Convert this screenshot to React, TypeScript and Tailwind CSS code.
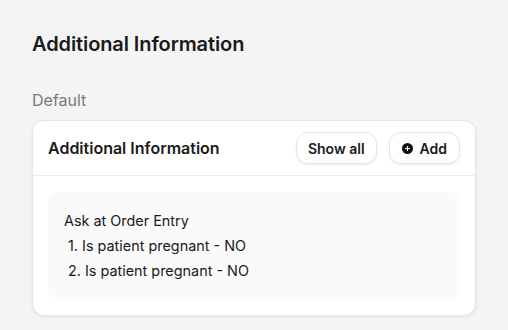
const questions = ["Is patient pregnant - NO", "Is patient pregnant - NO"]

const PlusCircle = () => (
  <svg width="11" height="11" viewBox="0 0 16 16" className="shrink-0">
    <circle cx="8" cy="8" r="8" fill="#111111" />
    <path d="M8 5v6M5 8h6" stroke="#ffffff" strokeWidth="1.6" strokeLinecap="round" />
  </svg>
)

export default function App() {
  return (
    <div className="min-h-[330px] w-full bg-[#f4f4f4] px-8 pt-[30px] font-['Inter',sans-serif] text-[#1a1a1a]">
      <h1 className="text-[20px] font-semibold leading-[28px] tracking-[-0.1px]">Additional Information</h1>
      <p className="mt-[32px] text-[16px] leading-[21px] text-[#7a7a7a]">Default</p>
      <div className="mt-[9px] w-[444px] overflow-hidden rounded-[12px] border border-[#e6e6e6] bg-white shadow-[0_1px_3px_rgba(0,0,0,0.08)]">
        <div className="flex h-[55px] items-center justify-between border-b border-[#ececec] pl-[15px] pr-[15px]">
          <h2 className="text-[16px] font-semibold">Additional Information</h2>
          <div className="flex items-center gap-3">
            <button className="h-[32px] rounded-[12px] border border-[#e4e4e4] bg-white px-[11px] text-[14px] font-semibold shadow-[0_1px_2px_rgba(0,0,0,0.08)]">
              Show all
            </button>
            <button className="flex h-[32px] items-center gap-[7px] rounded-[12px] border border-[#e4e4e4] bg-white px-[12px] text-[14px] font-semibold shadow-[0_1px_2px_rgba(0,0,0,0.08)]">
              <PlusCircle />
              Add
            </button>
          </div>
        </div>
        <div className="px-[15px] pb-[16px] pt-[16px]">
          <div className="rounded-[10px] bg-[#fafafa] px-4 pb-[16px] pt-[16px] text-[14.4px] leading-[25px]">
            <p>Ask at Order Entry</p>
            <ol className="pl-[4px]">
              {questions.map((q, i) => (
                <li key={i}>{`${i + 1}. ${q}`}</li>
              ))}
            </ol>
          </div>
        </div>
      </div>
    </div>
  )
}
